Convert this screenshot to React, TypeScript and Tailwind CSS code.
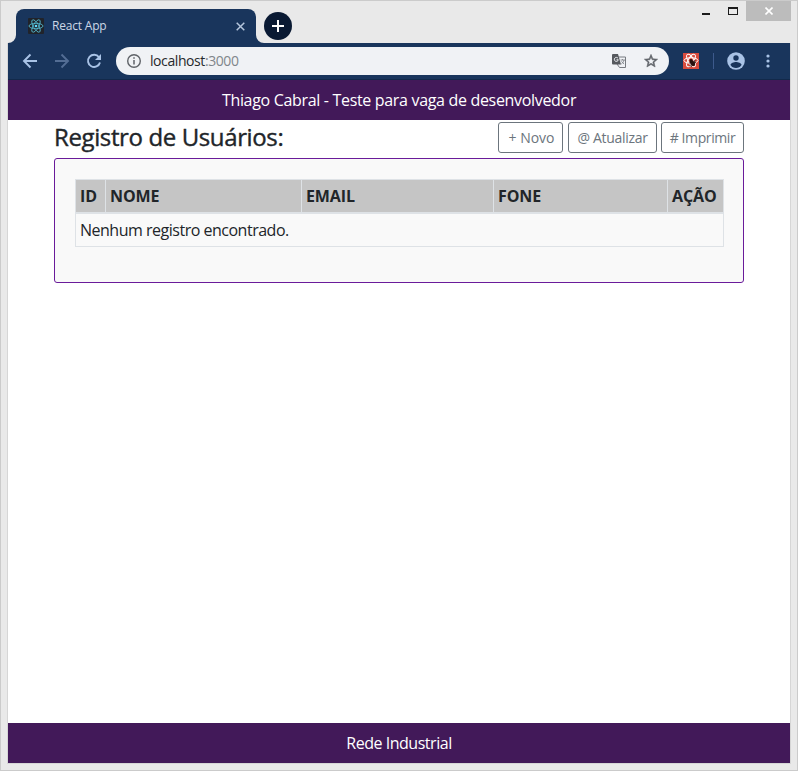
import type { ReactNode } from "react";

function OutlineButton({ width, children }: { width: string; children: ReactNode }) {
  return (
    <button className={`flex h-[31px] items-center justify-center whitespace-nowrap rounded-[3px] border border-[#6c757d] bg-white text-[14px] text-[#6c757d] ${width}`}>
      {children}
    </button>
  );
}

function TabStrip() {
  return (
    <div className="flex h-[42px] w-full items-start">
      <div className="relative ml-[15px] mt-2 flex h-[34px] w-[240px] items-center rounded-t-lg bg-[#19355c]">
        <svg className="absolute -left-2 bottom-0" width="8" height="8" viewBox="0 0 8 8">
          <path d="M8 0v8H0a8 8 0 0 0 8-8z" fill="#19355c" />
        </svg>
        <svg className="absolute -right-2 bottom-0" width="8" height="8" viewBox="0 0 8 8">
          <path d="M0 0v8h8a8 8 0 0 1-8-8z" fill="#19355c" />
        </svg>
        <svg className="ml-3" width="16" height="16" viewBox="0 0 16 16">
          <rect width="16" height="16" rx="1" fill="#20232a" />
          <g fill="none" stroke="#53b8cf" strokeWidth=".85">
            <ellipse cx="8" cy="8" rx="7" ry="2.7" />
            <ellipse cx="8" cy="8" rx="7" ry="2.7" transform="rotate(60 8 8)" />
            <ellipse cx="8" cy="8" rx="7" ry="2.7" transform="rotate(120 8 8)" />
          </g>
          <circle cx="8" cy="8" r="1.3" fill="#61dafb" />
        </svg>
        <span className="ml-2 flex-1 text-[12px] tracking-[-0.2px] text-[#ccd7e6]">React App</span>
        <svg className="mr-[11px]" width="9" height="9" viewBox="0 0 9 9">
          <path d="M.7.7l7.6 7.6M8.3.7L.7 8.3" stroke="#b5c6dc" strokeWidth="1.5" />
        </svg>
      </div>
      <svg className="ml-2 mt-[11px]" width="28" height="28" viewBox="0 0 28 28">
        <circle cx="14" cy="14" r="14" fill="#0a1a33" />
        <path d="M14 8v12M8 14h12" stroke="#fff" strokeWidth="2" />
      </svg>
      <div className="ml-auto mr-[6px] flex items-start">
        <div className="mr-[18px] mt-3 h-[2px] w-2 bg-[#1c1c1c]" />
        <div className="mr-2 mt-[6px] h-2 w-[10px] border border-t-2 border-[#1c1c1c]" />
        <div className="flex h-5 w-[45px] items-center justify-center bg-[#bcbcbc]">
          <svg width="8" height="8" viewBox="0 0 8 8">
            <path d="M.5.5l7 7M7.5.5l-7 7" stroke="#fff" strokeWidth="1.6" />
          </svg>
        </div>
      </div>
    </div>
  );
}

function Toolbar() {
  return (
    <div className="flex h-[37px] items-center border-b border-[#12294a] bg-[#19355c]">
      <svg className="ml-[14px] shrink-0" width="16" height="16" viewBox="0 0 16 16">
        <path d="M15 8H2M8.5 1.5L2 8l6.5 6.5" fill="none" stroke="#a9c3e6" strokeWidth="1.9" />
      </svg>
      <svg className="ml-4 shrink-0" width="16" height="16" viewBox="0 0 16 16">
        <path d="M1 8h13M7.5 1.5L14 8l-6.5 6.5" fill="none" stroke="#536d94" strokeWidth="1.9" />
      </svg>
      <svg className="ml-4 shrink-0" width="16" height="16" viewBox="0 0 16 16">
        <path d="M13 4.2A6.1 6.1 0 1 0 14 9.5" fill="none" stroke="#a9c3e6" strokeWidth="1.9" />
        <path d="M15 1v6H9z" fill="#a9c3e6" />
      </svg>
      <div className="ml-[14px] flex h-7 w-[553px] shrink-0 items-center rounded-full bg-[#f0f2f5]">
        <svg className="ml-[11px]" width="14" height="14" viewBox="0 0 14 14">
          <circle cx="7" cy="7" r="6.3" fill="none" stroke="#5f6368" strokeWidth="1.4" />
          <path d="M7 3.3v1.5M7 6v4.5" stroke="#5f6368" strokeWidth="1.5" />
        </svg>
        <span className="mb-px ml-[9px] text-[14px] tracking-[-0.42px] text-[#27292c]">
          localhost<span className="text-[#80868b]">:3000</span>
        </span>
        <svg className="ml-auto" width="14" height="14" viewBox="0 0 14 14">
          <path d="M5 3h8.5v10.5H7.5L5 10z" fill="#f0f2f5" stroke="#777b80" />
          <path d="M1 0h5l3 10.500H1a1 1 0 0 1-1-1V1a1 1 0 0 1 1-1z" fill="#56595e" />
          <path d="M6 4.3A2 2 0 1 0 6.3 5.8H4.5" fill="none" stroke="#f0f2f5" />
          <path d="M8.5 6H13M10.5 5v1M12 6c-.3 1.8-1.3 3-2.7 4M9.5 7.3l2.5 2.8" fill="none" stroke="#777b80" strokeWidth=".8" />
        </svg>
        <svg className="ml-[17px] mr-[10px]" width="16" height="16" viewBox="0 0 24 24">
          <path d="M22 9.24l-7.19-.62L12 2 9.19 8.63 2 9.24l5.46 4.73L5.82 21 12 17.27 18.18 21l-1.63-7.03zM12 15.4l-3.76 2.27 1-4.28-3.32-2.88 4.38-.38L12 6.1l1.71 4.04 4.38.38-3.32 2.88 1 4.28z" fill="#5f6368" stroke="#5f6368" strokeWidth=".8" />
        </svg>
      </div>
      <svg className="ml-[14px] shrink-0" width="16" height="16" viewBox="0 0 16 16">
        <rect width="16" height="16" fill="#d94b3d" />
        <g fill="none" stroke="#fff" strokeWidth="1">
          <ellipse cx="8" cy="7.5" rx="7" ry="2.8" />
          <ellipse cx="8" cy="7.5" rx="7" ry="2.8" transform="rotate(60 8 7.500)" />
          <ellipse cx="8" cy="7.5" rx="7" ry="2.8" transform="rotate(120 8 7.500)" />
        </g>
        <ellipse cx="9.5" cy="10" rx="2" ry="3.4" fill="#29120f" transform="rotate(-35 9.500 10)" />
        <circle cx="8" cy="7.5" r="1.4" fill="#29120f" />
        <path d="M6 10l7-.5M8 14l4-7M6.500 13l6-5" stroke="#29120f" strokeWidth=".8" />
      </svg>
      <div className="ml-[14px] h-4 w-px bg-[#3d5a8c]" />
      <svg className="ml-[13px] shrink-0" width="18" height="18" viewBox="0 0 18 18">
        <circle cx="9" cy="9" r="8.8" fill="#a9c3e6" />
        <circle cx="9" cy="6" r="2.7" fill="#19355c" />
        <path d="M3.5 13c0-2 3.5-3 5.500-3s5.500 1 5.500 3a6.500 6.500 0 0 1-11 0z" fill="#19355c" />
      </svg>
      <svg className="ml-[21px] shrink-0" width="4" height="14" viewBox="0 0 4 14">
        <g fill="#a9c3e6">
          <circle cx="2" cy="2" r="1.6" />
          <circle cx="2" cy="7" r="1.6" />
          <circle cx="2" cy="12" r="1.6" />
        </g>
      </svg>
    </div>
  );
}

export default function App() {
  return (
    <div className="flex h-[771px] w-[798px] flex-col border border-[#cbcbcb] bg-[#e9e9e9] font-['Open_Sans','Noto_Sans',sans-serif] text-[#212529]">
      <TabStrip />
      <div className="mx-[6px] flex h-[721px] flex-col border border-t-0 border-[#d6d6d6] bg-white">
        <Toolbar />
        <header className="flex h-10 shrink-0 items-center justify-center bg-[#421959] text-[16px] text-white">
          <span className="tracking-[-0.32px]">Thiago Cabral - Teste para vaga de desenvolvedor</span>
        </header>
        <main className="flex-1 px-[46px]">
          <div className="flex h-[38px] items-start pt-[2px]">
            <h1 className="mr-auto text-[24px] font-medium leading-[30px] tracking-[-0.38px] [-webkit-text-stroke:0.4px_#212529]">Registro de Usuários:</h1>
            <div className="flex">
              <OutlineButton width="w-[65px] mr-[5px] pl-[2px]"><span>+ Novo</span></OutlineButton>
              <OutlineButton width="w-[89px] mr-[4px] tracking-[-0.3px]"><span>@ Atualizar</span></OutlineButton>
              <OutlineButton width="w-[83px] tracking-[-0.4px]"><span># Imprimir</span></OutlineButton>
            </div>
          </div>
          <section className="h-[125px] rounded-[3px] border border-[#6a1b9a] bg-[#f9f9f9] px-5 pt-5">
            <table className="w-[649px] table-fixed border-collapse text-left text-[16px] leading-6">
              <colgroup>
                <col className="w-[30px]" />
                <col className="w-[196px]" />
                <col className="w-[192px]" />
                <col className="w-[174px]" />
                <col />
              </colgroup>
              <thead>
                <tr className="h-[33px] bg-[#c5c5c5]">
                  {["ID", "NOME", "EMAIL", "FONE", "AÇÃO"].map((h) => (
                    <th key={h} className="whitespace-nowrap border border-b-2 border-[#dee2e6] p-0 pl-1 pt-px font-bold tracking-[-0.1px]">
                      <span>{h}</span>
                    </th>
                  ))}
                </tr>
              </thead>
              <tbody>
                <tr className="h-[34px]">
                  <td colSpan={5} className="border border-[#dee2e6] p-0 pl-1 pt-px tracking-[-0.49px]">
                    <span>Nenhum registro encontrado.</span>
                  </td>
                </tr>
              </tbody>
            </table>
          </section>
        </main>
        <footer className="flex h-10 shrink-0 items-center justify-center bg-[#421959] text-[16px] text-white">
          <span className="tracking-[-0.47px]">Rede Industrial</span>
        </footer>
      </div>
    </div>
  );
}
